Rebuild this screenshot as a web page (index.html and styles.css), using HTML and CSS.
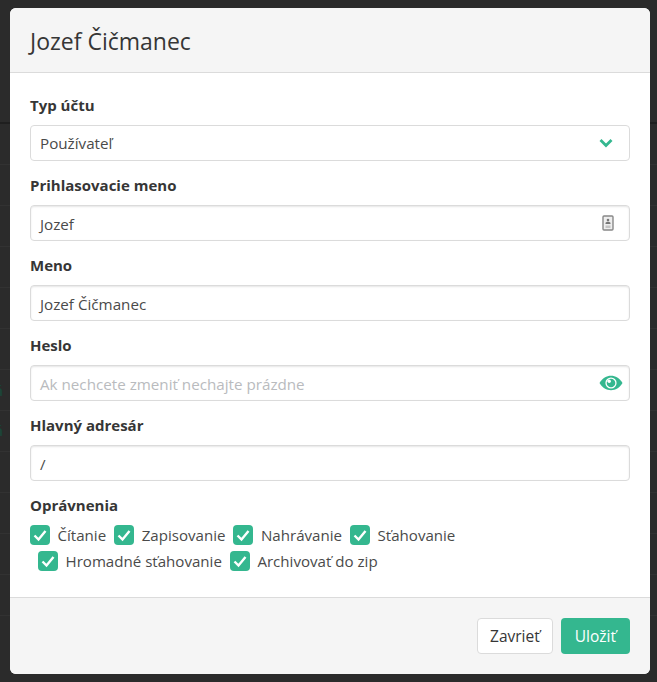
FILE: index.html
```html
<!DOCTYPE html>
<html lang="sk">
<head>
<meta charset="utf-8">
<title>Jozef Čičmanec</title>
<link rel="stylesheet" href="styles.css">
</head>
<body>
<div class="backdrop">
  <div class="topbar"></div>
  <span class="ghost g1">á</span>
  <span class="ghost g2">á</span>
</div>
<div class="modal">
  <header class="head">Jozef Čičmanec</header>
  <section class="body">
    <div class="field">
      <label class="label">Typ účtu</label>
      <div class="input">
        <span>Používateľ</span>
        <svg class="chev" viewBox="0 0 14 10" width="14" height="10"><path d="M1.500 2 7 7.500 12.500 2" fill="none" stroke="#34b78f" stroke-width="2.800"/></svg>
      </div>
    </div>
    <div class="field">
      <label class="label">Prihlasovacie meno</label>
      <div class="input inset">
        <span>Jozef</span>
        <svg class="contact" viewBox="0 0 12 16" width="12" height="16"><rect x="1" y="1" width="10" height="14" rx="1" fill="#eee" stroke="#888" stroke-width="1.400"/><circle cx="6" cy="5" r="1.300" fill="#777"/><path d="M3.500 9h5V7.800L7 6.800H5L3.500 7.800z" fill="#777"/><path d="M3.500 10.500h5v2.500h-5z" fill="#c4c4c4"/></svg>
      </div>
    </div>
    <div class="field">
      <label class="label">Meno</label>
      <div class="input inset"><span>Jozef Čičmanec</span></div>
    </div>
    <div class="field">
      <label class="label">Heslo</label>
      <div class="input inset">
        <span class="placeholder">Ak nechcete zmeniť nechajte prázdne</span>
        <svg class="eye" viewBox="0 0 24 16" width="24" height="16"><path d="M0.500 8C3.500 3 7.500 0.800 12 0.800S20.500 3 23.500 8C20.500 13 16.500 15.200 12 15.200S3.500 13 0.500 8Z" fill="#34b78f"/><circle cx="12" cy="8" r="5.600" fill="#fff"/><circle cx="12" cy="8" r="4.300" fill="#34b78f"/><circle cx="10.200" cy="6.200" r="1.700" fill="#fff"/></svg>
      </div>
    </div>
    <div class="field">
      <label class="label">Hlavný adresár</label>
      <div class="input inset"><span>/</span></div>
    </div>
    <div class="perms">
      <label class="label">Oprávnenia</label>
      <div class="checks">
        <div class="check"><svg class="box" viewBox="0 0 20 20"><rect width="20" height="20" rx="4" fill="#34b78f"/><path d="M4.500 10.500 8.500 14.500 15.500 6" fill="none" stroke="#fff" stroke-width="2.400"/></svg><span>Čítanie</span></div>
        <div class="check"><svg class="box" viewBox="0 0 20 20"><rect width="20" height="20" rx="4" fill="#34b78f"/><path d="M4.500 10.500 8.500 14.500 15.500 6" fill="none" stroke="#fff" stroke-width="2.400"/></svg><span>Zapisovanie</span></div>
        <div class="check"><svg class="box" viewBox="0 0 20 20"><rect width="20" height="20" rx="4" fill="#34b78f"/><path d="M4.500 10.500 8.500 14.500 15.500 6" fill="none" stroke="#fff" stroke-width="2.400"/></svg><span>Nahrávanie</span></div>
        <div class="check"><svg class="box" viewBox="0 0 20 20"><rect width="20" height="20" rx="4" fill="#34b78f"/><path d="M4.500 10.500 8.500 14.500 15.500 6" fill="none" stroke="#fff" stroke-width="2.400"/></svg><span>Sťahovanie</span></div>
        <div class="check second"><svg class="box" viewBox="0 0 20 20"><rect width="20" height="20" rx="4" fill="#34b78f"/><path d="M4.500 10.500 8.500 14.500 15.500 6" fill="none" stroke="#fff" stroke-width="2.400"/></svg><span>Hromadné sťahovanie</span></div>
        <div class="check"><svg class="box" viewBox="0 0 20 20"><rect width="20" height="20" rx="4" fill="#34b78f"/><path d="M4.500 10.500 8.500 14.500 15.500 6" fill="none" stroke="#fff" stroke-width="2.400"/></svg><span>Archivovať do zip</span></div>
      </div>
    </div>
  </section>
  <footer class="foot">
    <button class="btn">Zavrieť</button>
    <button class="btn primary">Uložiť</button>
  </footer>
</div>
</body>
</html>
```
FILE: styles.css
```css
* { box-sizing: border-box; }
html, body { margin: 0; height: 100%; }
body {
  background: #2b2b2b;
  font-family: "Open Sans", "Liberation Sans", sans-serif;
  color: #363636;
  padding: 8px 7px 8px 10px;
  overflow: hidden;
}
.backdrop {
  position: absolute;
  inset: 0;
  background: repeating-linear-gradient(to bottom, #323232 0, #323232 1px, transparent 1px, transparent 41px) 0 164px / 100% 452px no-repeat;
}
.topbar { position: absolute; top: 122px; left: 0; right: 0; height: 2px; background: #1f1f1f; }
.ghost { position: absolute; left: -6px; font-size: 15px; line-height: 20px; font-weight: 700; color: #1d4438; }
.g1 { top: 380px; }
.g2 { top: 420px; }
.modal {
  position: relative;
  width: 640px;
  height: 666px;
  display: flex;
  flex-direction: column;
  border-radius: 6px;
  overflow: hidden;
  background: #fff;
}
.head {
  height: 65px;
  padding: 2px 20px 0;
  display: flex;
  align-items: center;
  background: #f5f5f5;
  border-bottom: 1px solid #dbdbdb;
  font-size: 23px;
  color: #363636;
}
.body {
  flex: 1;
  padding: 20px 20px 0;
  display: flex;
  flex-direction: column;
}
.field { height: 80px; }
.label {
  display: block;
  height: 32px;
  font-size: 15px;
  font-weight: 700;
  line-height: 24px;
  color: #363636;
}
.input {
  height: 36px;
  display: flex;
  align-items: center;
  justify-content: space-between;
  padding: 0 10px 0 9px;
  background: #fff;
  border: 1px solid #dbdbdb;
  border-radius: 4px;
  font-size: 15.200px;
  color: #4a4a4a;
}
.inset span { padding-top: 1px; }
.inset { box-shadow: inset 0 1px 2px rgba(10, 10, 10, .1); }
.placeholder { color: #b9bbbe; }
.chev { margin-right: 6px; }
.contact { margin-right: 5px; }
.eye { margin-right: -4px; }
.checks {
  display: flex;
  flex-wrap: wrap;
  row-gap: 6px;
  column-gap: 8px;
  width: 440px;
}
.check { display: flex; align-items: center; gap: 7.500px; height: 20px; font-size: 15.100px; color: #4a4a4a; }
.second { margin-left: 8px; }
.box { width: 20px; height: 20px; flex: none; }
.foot {
  height: 77px;
  padding: 20px;
  display: flex;
  justify-content: flex-end;
  gap: 8px;
  background: #f5f5f5;
  border-top: 1px solid #dbdbdb;
}
.btn {
  height: 36px;
  padding: 0 12px;
  border: 1px solid #dbdbdb;
  border-radius: 4px;
  background: #fff;
  color: #363636;
  font-family: inherit;
  font-size: 15.500px;
}
.primary { padding: 0 13px; background: #34b78f; border-color: transparent; color: #fff; }
```
